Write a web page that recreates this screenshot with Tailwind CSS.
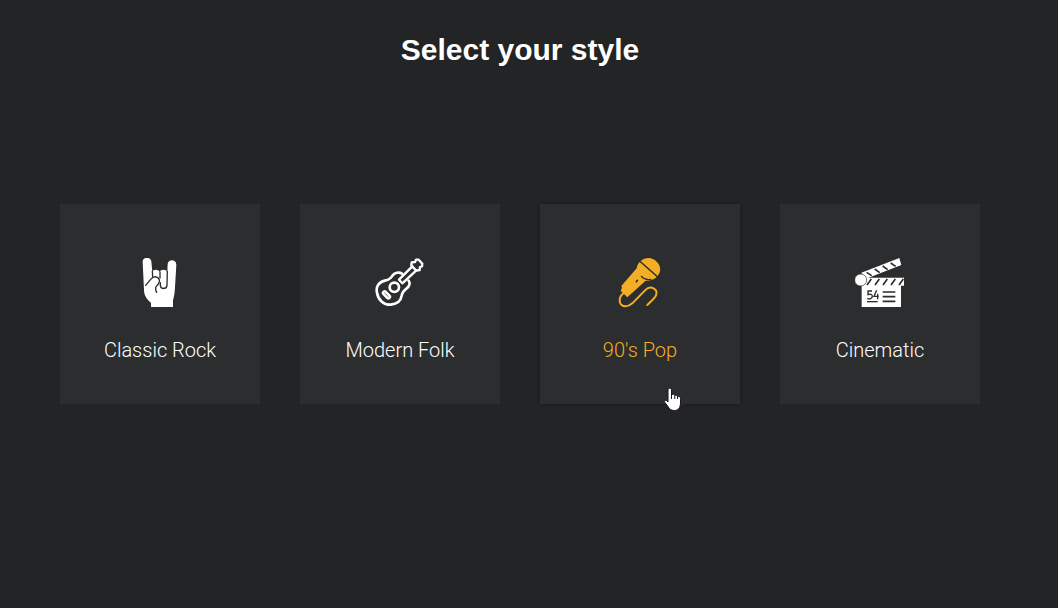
<!DOCTYPE html>
<html lang="en">
	<head>
		<meta charset="UTF-8" />
		<meta name="viewport" content="width=device-width, initial-scale=1.0" />
		<title>Select your style</title>
		<script src="https://cdn.jsdelivr.net/npm/@tailwindcss/browser@4"></script>
	</head>
	<body class="bg-[#232425] min-h-screen text-white pl-[60px] pr-[78px] pt-8">
		<h1 class="text-center text-[30px] leading-9 font-bold font-['Liberation_Sans',Arial,sans-serif]">Select your style</h1>

		<!-- style cards -->
		<main class="grid grid-cols-4 gap-10 mt-34 font-['Roboto',sans-serif]">
			<button type="button" class="aspect-square flex flex-col items-center justify-center gap-7 pt-[14px] bg-[#2c2d2e] cursor-pointer">
				<svg class="size-[50px]" viewBox="15 24 150 150" aria-hidden="true">
					<path fill="#fff" d="M38 36C37 20 62 19 64 34L67 66C69 58 85 57 89 66C92 57 109 58 112 66L113 42C114 26 139 27 139 44L135 112C134 132 131 144 129 152V171H63V158C50 148 42 136 42 120Z" />
					<g fill="none" stroke="#2c2d2e" stroke-width="4" stroke-linecap="round" stroke-linejoin="round">
						<path d="M47 106L62 88C68 81 75 78 82 82C90 87 90 95 85 102L79 109C76 113 76 119 80 127" />
						<path d="M67 64L68 80" />
						<path d="M90 66V84M91 98V106C92 119 110 118 111 106L112 64" />
					</g>
				</svg>
				<span class="text-xl leading-7 font-light">Classic Rock</span>
			</button>

			<button type="button" class="aspect-square flex flex-col items-center justify-center gap-7 pt-[14px] bg-[#2c2d2e] cursor-pointer">
				<svg class="size-[50px]" viewBox="21 24 150 150" fill="none" stroke="#fff" stroke-width="8" stroke-linecap="round" stroke-linejoin="round" aria-hidden="true">
					<path d="M102 71C93 65 80 68 74 76C69 84 65 89 53 91C32 95 23 110 27 128C31 151 48 165 68 164C88 162 99 151 101 137C102 126 108 122 115 116C125 109 127 99 122 92" />
					<path stroke-width="7" d="M133 49L93 89L103 100L145 61" />
					<path stroke-width="7" d="M130 47L131 37L141 36L144 29L152 29L163 41L162 49L156 51L155 60L145 62Z" />
					<circle cx="79" cy="112" r="14" />
					<path stroke-width="17" d="M50 129L61 140" />
					<path stroke="#2c2d2e" stroke-width="2" d="M50 129L61 140" />
				</svg>
				<span class="text-xl leading-7 font-light">Modern Folk</span>
			</button>

			<!-- active card -->
			<button type="button" class="relative aspect-square flex flex-col items-center justify-center gap-7 pt-[14px] bg-[#2c2d2e] text-[#f3ae25] shadow-[0_0_4px_rgba(0,0,0,0.35)] cursor-pointer">
				<svg class="size-[50px]" viewBox="21 24 150 150" aria-hidden="true">
					<path fill="#f3ae25" d="M98 33C113 20 134 22 146 35C159 47 160 65 149 78Z" />
					<path fill="#f3ae25" d="M95 36L146 81C136 90 124 93 113 92L58 142L38 122L42 113L40 108L86 55C87 48 89 42 95 36Z" />
					<path fill="none" stroke="#2c2d2e" stroke-width="4" stroke-linecap="round" d="M100 79C107 87 117 90 128 88" />
					<path fill="none" stroke="#2c2d2e" stroke-width="5" stroke-linecap="round" d="M85 95L88 91" />
					<path fill="none" stroke="#f3ae25" stroke-width="6" stroke-linecap="round" stroke-linejoin="round" d="M46 130C29 145 32 168 53 169C61 169 67 165 73 160L111 121C128 104 151 117 144 136C142 142 138 145 118 165" />
				</svg>
				<span class="text-xl leading-7 font-light">90's Pop</span>
				<svg class="absolute left-[62%] top-[92%] w-[18px] h-6" viewBox="0 0 18 24" aria-hidden="true">
					<path fill="#fff" stroke="#15171c" stroke-width="1" stroke-linejoin="round" d="M4 2C4 -.3 7.5 -.3 7.5 2V7C9 5.9 10.7 6.3 10.8 7.6C12 6.8 13.5 7.4 13.6 8.7C15 8 16.5 8.8 16.5 10.5V15C16.5 20 13.6 22.5 10.5 22.5C7 22.5 5.3 21 4 18.5L.8 14.4C-.4 12.3 1.6 11.5 3 13L4 14Z" />
					<path fill="none" stroke="#15171c" stroke-width="1" d="M7.5 7V11M10.8 7.6V11M13.6 8.7V11" />
				</svg>
			</button>

			<button type="button" class="aspect-square flex flex-col items-center justify-center gap-7 pt-[14px] bg-[#2c2d2e] cursor-pointer">
				<svg class="size-[50px]" viewBox="21 24 150 150" aria-hidden="true">
					<path fill="#fff" d="M40 68L154 24L160 45L52 87Z" />
					<path fill="#fff" d="M49 83H168V107H159V171H41V101Z" />
					<g stroke="#2c2d2e" stroke-width="5">
						<path d="M56 67L71 77M80 57L95 68M104 48L119 59M128 39L143 49" />
						<path d="M57 105L70 87M81 105L94 87M105 105L118 87M129 105L142 87M153 105L166 87" />
					</g>
					<circle cx="38" cy="90" r="18" fill="#fff" stroke="#2c2d2e" stroke-width="2" />
					<g fill="none" stroke="#2c2d2e" stroke-width="4">
						<path d="M72 123H60V134C69 131 73 134 73 139C73 146 64 149 58 145" />
						<path d="M86 121L78 139H92M89 131V148" />
						<path d="M57 155H89" />
						<path stroke-width="5" d="M104 126H142M104 140H142M104 154H142" />
					</g>
				</svg>
				<span class="text-xl leading-7 font-light">Cinematic</span>
			</button>
		</main>
	</body>
</html>
